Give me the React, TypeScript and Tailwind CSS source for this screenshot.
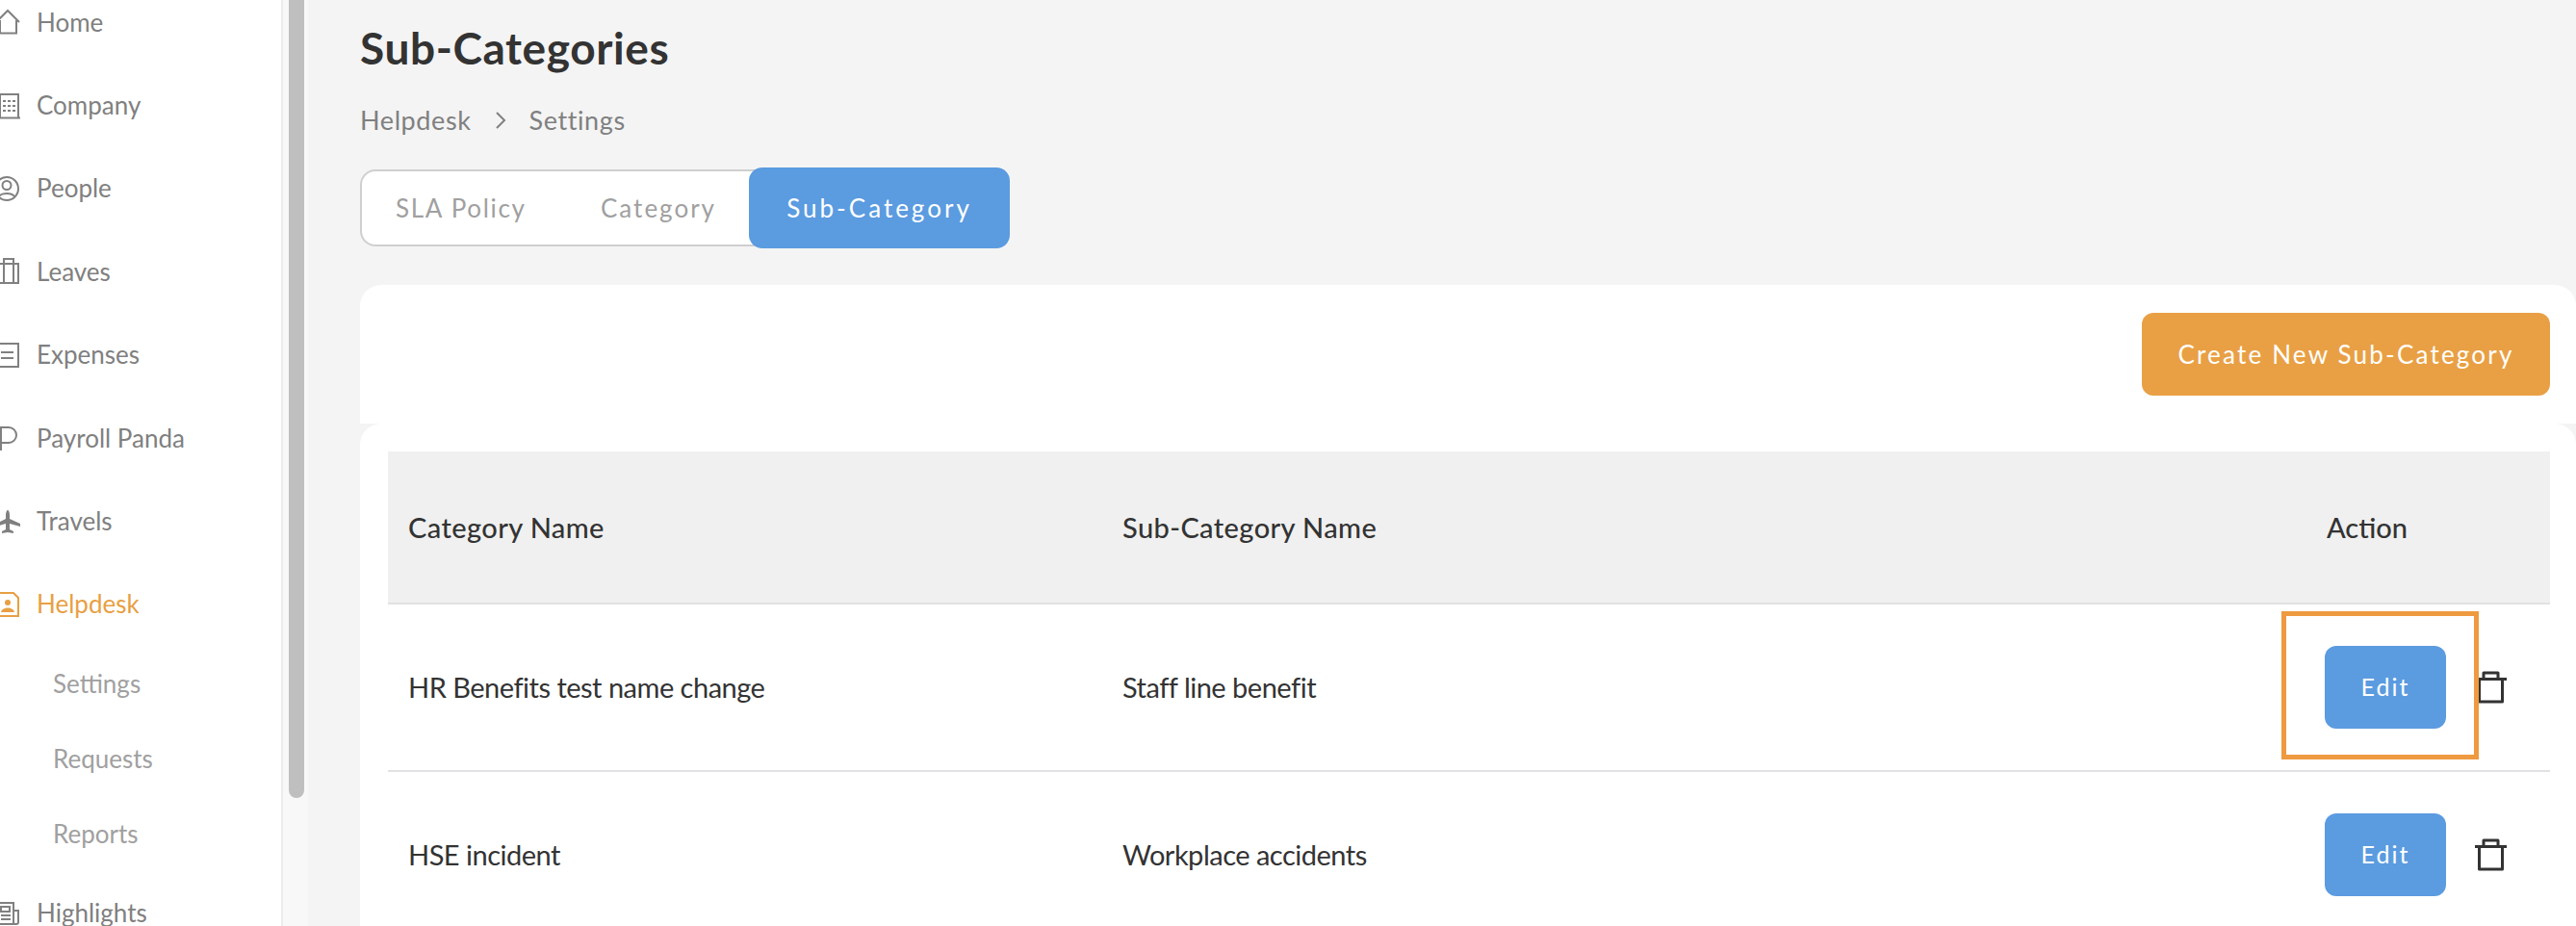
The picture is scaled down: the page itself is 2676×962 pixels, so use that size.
import React from "react";

const I = ({ children, color = "#808080" }: { children: React.ReactNode; color?: string }) => (
  <svg width="26" height="28" viewBox="0 0 26 28" fill="none" stroke={color} strokeWidth="2" className="shrink-0">
    {children}
  </svg>
);

const icons: Record<string, React.ReactNode> = {
  Home: <I><path d="M1 14 13 2l12 12M5 12v13.500h17V12" /></I>,
  Company: (
    <I>
      <path d="M5 26V2h19v24M0 26.500h26" />
      <path d="M8 9h3M13 9h3M18 9h3M8 14h3M13 14h3M18 14h3M8 19h3M13 19h3M18 19h3" strokeWidth="2" />
    </I>
  ),
  People: (
    <I>
      <circle cx="12" cy="14" r="12" />
      <circle cx="12" cy="10.500" r="4.500" />
      <path d="M4 22c3-4 13-4 16 0" />
    </I>
  ),
  Leaves: <I><path d="M3 6h21v20H3zM9 26V1h10v25" /></I>,
  Expenses: <I><path d="M1 2h23v24H1zM6 11h13M6 17h13" /></I>,
  "Payroll Panda": <I><path d="M6 27V3h8a8 8 0 0 1 0 16H6" /></I>,
  Travels: (
    <I>
      <path
        d="M13 2c1 0 2 2 2 5v4l11 5v3l-11-3v6l4 2v2l-6-1-6 1v-2l4-2v-6L1 19v-3l10-5V7c0-3 1-5 2-5z"
        fill="#808080"
        stroke="none"
      />
    </I>
  ),
  Helpdesk: (
    <I color="#e89f43">
      <path d="M4 2h15l5 5v19H4z" />
      <circle cx="13" cy="12" r="3" fill="#e89f43" stroke="none" />
      <path d="M6 22c1-6 13-6 14 0z" fill="#e89f43" stroke="none" />
    </I>
  ),
  Highlights: (
    <I>
      <path d="M3 4h16v22H3zM19 12h5v12a2 2 0 0 1-2 2h-3" />
      <path d="M6 8h9v5H6zM6 17h10M6 21h10" />
    </I>
  ),
};

const Nav = ({ label, h = "h-[86.400px]", active = false }: { label: string; h?: string; active?: boolean }) => (
  <div className={`flex items-center gap-[17px] ${h} ${active ? "text-[#e89f43]" : "text-[#808080]"}`}>
    {icons[label]}
    <span className="whitespace-nowrap">{label}</span>
  </div>
);

const Sub = ({ label, h }: { label: string; h: string }) => (
  <div className={`flex items-center pl-[60px] text-[#a0a0a0] ${h}`}>{label}</div>
);

const Trash = () => (
  <svg width="34" height="34" viewBox="0 0 34 34" fill="none" stroke="#333" strokeWidth="3" strokeLinejoin="round">
    <path d="M0 8.500h33M4.500 9v23h24V9M9 8V2h15v6" />
  </svg>
);

const Row = ({ a, b, highlight = false }: { a: string; b: string; highlight?: boolean }) => (
  <div className="grid grid-cols-[742px_1249px_1fr] items-center pl-[21px] h-[174px] border-b-2 border-[#e2e2e4] text-[29px] text-[#333] tracking-[-0.5px]">
    <div>{a}</div>
    <div>{b}</div>
    <div className="relative flex items-center gap-[30px]">
      <button className="w-[126px] h-[86px] rounded-[12px] bg-[#5b9be0] text-white text-[25px] tracking-[2px]">Edit</button>
      <Trash />
      {highlight && (
        <div className="absolute left-[-45px] top-[-36px] w-[205px] h-[154px] border-[5px] border-[#ee9a40]" />
      )}
    </div>
  </div>
);

export default function App() {
  return (
    <div className="flex h-[962px] w-[2676px] overflow-hidden bg-[#f4f4f4] font-['Lato',sans-serif]">
      <aside className="w-[294px] shrink-0 h-full overflow-hidden bg-white border-r-2 border-[#ececec] text-[26px]">
        <div className="-mt-[20px] -ml-[5px]">
          <Nav label="Home" />
          <Nav label="Company" />
          <Nav label="People" />
          <Nav label="Leaves" />
          <Nav label="Expenses" />
          <Nav label="Payroll Panda" />
          <Nav label="Travels" />
          <Nav label="Helpdesk" active />
          <Sub label="Settings" h="h-[78px]" />
          <Sub label="Requests" h="h-[78px]" />
          <Sub label="Reports" h="h-[78px]" />
          <Nav label="Highlights" />
        </div>
      </aside>
      <div className="w-[26px] shrink-0 h-full bg-[#f8f8f8] px-[6px]">
        <div className="w-[16px] h-[829px] bg-[#bfbfbf] rounded-b-[8px]" />
      </div>
      <main className="flex-1 min-w-0 pl-[54px] pt-[24px]">
        <h1 className="text-[46px] leading-[52px] font-bold text-[#333] tracking-[0.6px]">Sub-Categories</h1>
        <div className="flex items-center mt-[27px] h-[44px] text-[27px] tracking-[0.6px] text-[#808080]">
          <span>Helpdesk</span>
          <svg width="12" height="18" viewBox="0 0 12 18" fill="none" stroke="#808080" strokeWidth="2" className="ml-[24px] mr-[24px]">
            <path d="M2 1l8 8-8 8" />
          </svg>
          <span>Settings</span>
        </div>
        <div className="flex items-center mt-[27px] h-[84px] w-fit">
          <div className="flex items-center h-[80px] w-[430px] -mr-[26px] pl-[35px] rounded-l-[16px] border-2 border-[#cfcfcf] bg-white text-[26px] tracking-[1.700px] text-[#a0a0a0]">
            <span className="w-[213px]">SLA Policy</span>
            <span className="tracking-[2px]">Category</span>
          </div>
          <div className="relative flex items-center justify-center w-[271px] h-[84px] rounded-[14px] bg-[#5b9be0] text-[26px] tracking-[3px] text-white">
            Sub-Category
          </div>
        </div>
        <section className="mt-[38px] h-[144px] rounded-t-[22px] bg-white flex justify-end pt-[29px] pr-[27px]">
          <button className="w-[424px] h-[86px] rounded-[12px] bg-[#e9a044] text-white text-[26px] tracking-[2.200px]">
            Create New Sub-Category
          </button>
        </section>
        <section className="rounded-t-[22px] bg-white pt-[29px] pl-[29px] pr-[27px] h-[560px]">
          <div className="grid grid-cols-[742px_1251px_1fr] items-center pl-[21px] h-[159px] bg-[#f0f0f0] border-b-2 border-[#e2e2e4] text-[29px] font-medium text-[#333] tracking-[0.4px]">
            <div>Category Name</div>
            <div>Sub-Category Name</div>
            <div className="tracking-[0px]">Action</div>
          </div>
          <Row a="HR Benefits test name change" b="Staff line benefit" highlight />
          <Row a="HSE incident" b="Workplace accidents" />
        </section>
      </main>
    </div>
  );
}
